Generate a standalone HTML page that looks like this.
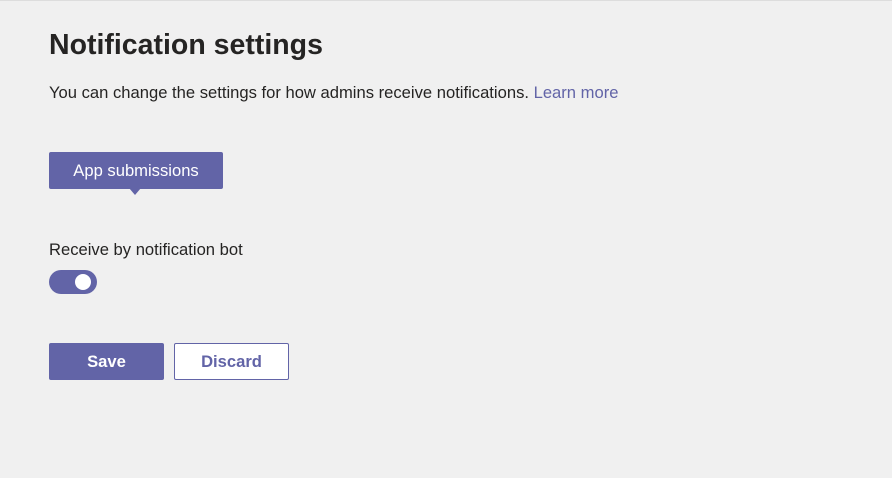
<!DOCTYPE html>
<html><head><style>
body{margin:0;width:892px;height:478px;background:#f0f0f0;font-family:"Liberation Sans",sans-serif;position:relative;overflow:hidden;border-top:1px solid #ddd;box-sizing:border-box}
.a{position:absolute}
h1{position:absolute;left:49px;top:28px;margin:0;font-size:28.5px;font-weight:bold;color:#252423}
.sub{left:49px;top:82px;font-size:16.6px;color:#252423}
.sub span{color:#6264a7}
.tab{left:49px;top:151px;width:174px;height:37px;background:#6264a7;border-radius:2px;color:#fff;font-size:16.6px;line-height:37px;text-align:center}
.arr{left:129px;top:187px;width:0;height:0;border-left:6px solid transparent;border-right:6px solid transparent;border-top:7px solid #6264a7}
.lbl{left:49px;top:239px;font-size:16.6px;color:#252423}
.tg{left:49px;top:269px;width:48px;height:24px;border-radius:12px;background:#6264a7}
.tg i{position:absolute;right:6px;top:4px;width:16px;height:16px;border-radius:50%;background:#fff}
.btn{top:342px;width:115px;height:37px;box-sizing:border-box;border-radius:2px;font-size:16.6px;font-weight:bold;line-height:35px;text-align:center}
</style></head><body>
<h1>Notification settings</h1>
<div class="a sub">You can change the settings for how admins receive notifications. <span>Learn more</span></div>
<div class="a tab">App submissions</div>
<div class="a arr"></div>
<div class="a lbl">Receive by notification bot</div>
<div class="a tg"><i></i></div>
<div class="a btn" style="left:49px;background:#6264a7;color:#fff;border:1px solid #6264a7">Save</div>
<div class="a btn" style="left:174px;background:#fff;color:#6264a7;border:1px solid #6264a7">Discard</div>
</body></html>
